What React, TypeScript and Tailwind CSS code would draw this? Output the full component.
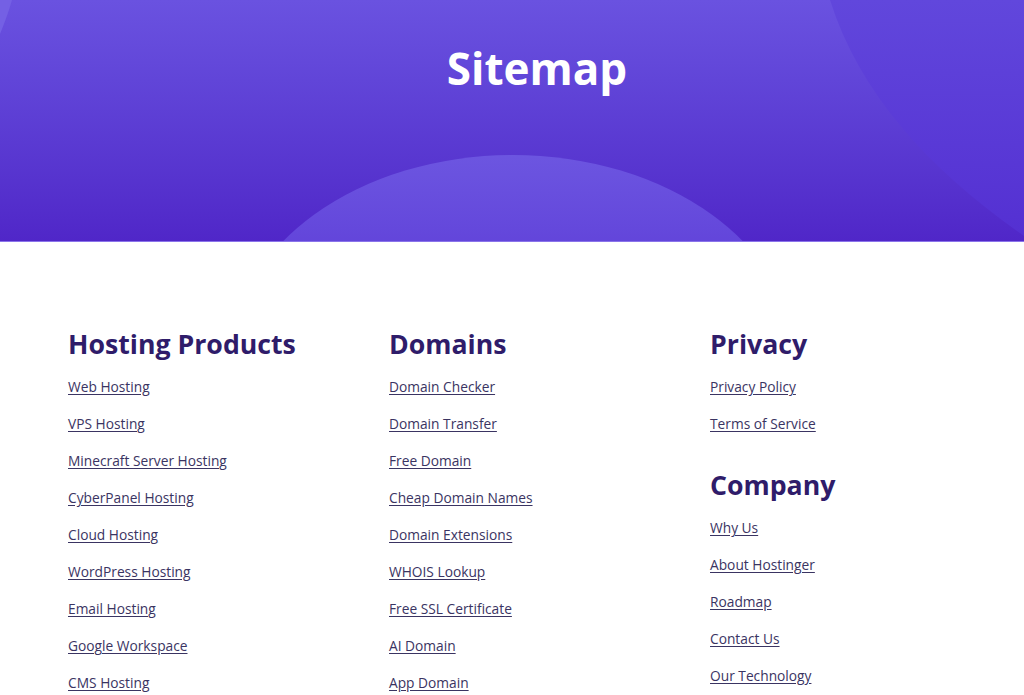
const sections: { title: string; links: string[] }[][] = [
  [
    {
      title: 'Hosting Products',
      links: [
        'Web Hosting',
        'VPS Hosting',
        'Minecraft Server Hosting',
        'CyberPanel Hosting',
        'Cloud Hosting',
        'WordPress Hosting',
        'Email Hosting',
        'Google Workspace',
        'CMS Hosting',
      ],
    },
  ],
  [
    {
      title: 'Domains',
      links: [
        'Domain Checker',
        'Domain Transfer',
        'Free Domain',
        'Cheap Domain Names',
        'Domain Extensions',
        'WHOIS Lookup',
        'Free SSL Certificate',
        'AI Domain',
        'App Domain',
      ],
    },
  ],
  [
    { title: 'Privacy', links: ['Privacy Policy', 'Terms of Service'] },
    {
      title: 'Company',
      links: ['Why Us', 'About Hostinger', 'Roadmap', 'Contact Us', 'Our Technology'],
    },
  ],
];

// decorative blobs behind the hero title
function HeroShapes() {
  return (
    <svg className="pointer-events-none absolute inset-0 h-full w-full" viewBox="0 0 1024 242" preserveAspectRatio="none">
      <defs>
        <linearGradient id="arc" x1="0" y1="0" x2="0" y2="1">
          <stop offset="0" stopColor="#6d57e1" stopOpacity="0.95" />
          <stop offset="0.45" stopColor="#5f3fdb" stopOpacity="0.7" />
          <stop offset="1" stopColor="#5a34d6" stopOpacity="0.4" />
        </linearGradient>
        <linearGradient id="ring" x1="0" y1="0" x2="0" y2="1">
          <stop offset="0" stopColor="#6147dc" />
          <stop offset="1" stopColor="#5430d2" />
        </linearGradient>
      </defs>
      <path d="M830,0 C860,95 930,170 1024,236 L1024,0 Z" fill="url(#ring)" />
      <ellipse cx="513" cy="360" rx="282" ry="205" fill="url(#arc)" />
      <path d="M0,0 L12,0 C8,14 4,24 0,34 Z" fill="#7460e4" />
    </svg>
  );
}

export default function App() {
  return (
    <div className="min-h-screen bg-white" style={{ fontFamily: '"Open Sans", "Noto Sans", sans-serif' }}>
      <header className="relative h-[242px] overflow-hidden bg-gradient-to-b from-[#6a52e0] to-[#5026c8]">
        <HeroShapes />
        <div className="relative flex justify-center pl-[50px] pt-[40px]">
          <h1 className="text-[44px] font-bold leading-[56px] text-white">Sitemap</h1>
        </div>
        <div className="absolute bottom-0 left-0 h-px w-full bg-[#8a74ea]" />
      </header>

      <main className="grid grid-cols-3 gap-x-[75px] px-[68px] pt-[84px] pb-16">
        {sections.map((col, i) => (
          <div key={i} className="flex flex-col gap-[33px]">
            {col.map((s) => (
              <section key={s.title}>
                <h2 className="text-[26.7px] font-bold leading-[36px] text-[#2f1c6a]">{s.title}</h2>
                <ul className="mt-[15px] flex flex-col gap-[17px]">
                  {s.links.map((l) => (
                    <li key={l} className="text-[13.75px] leading-[20px]">
                      <a href="#" className="text-[#3a3462] underline underline-offset-2">
                        {l}
                      </a>
                    </li>
                  ))}
                </ul>
              </section>
            ))}
          </div>
        ))}
      </main>
    </div>
  );
}
